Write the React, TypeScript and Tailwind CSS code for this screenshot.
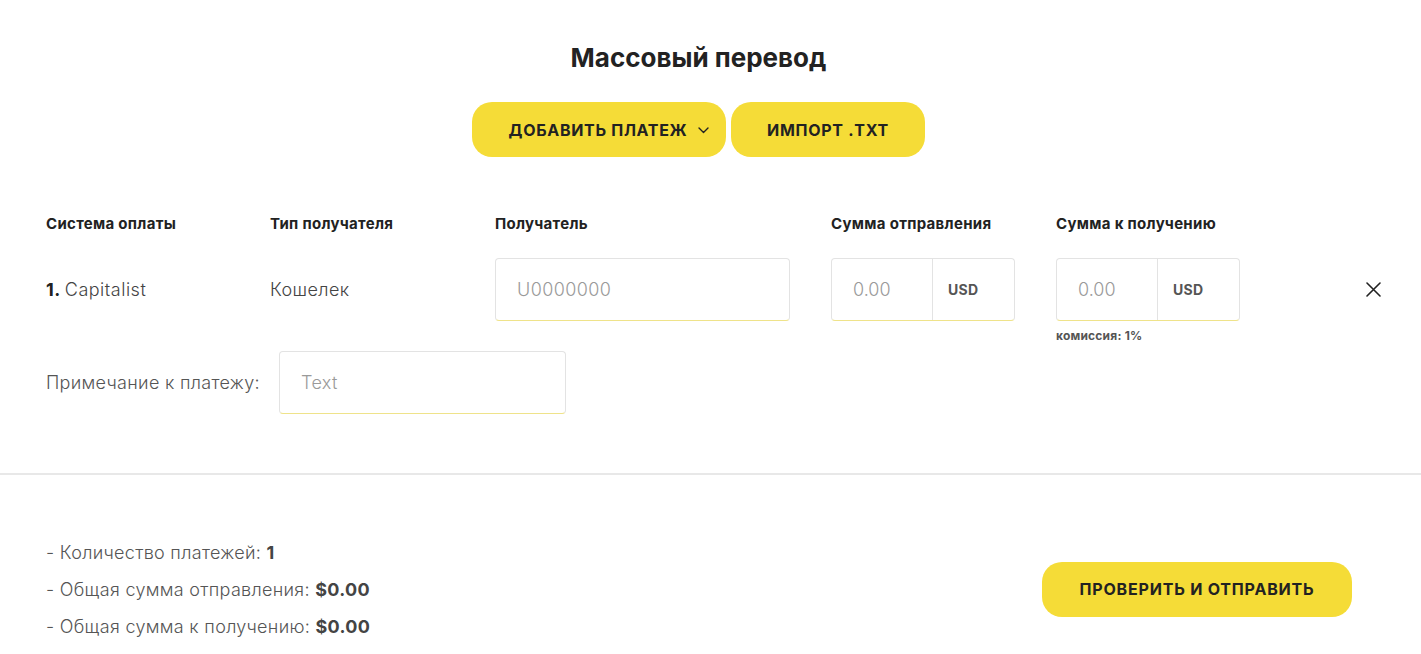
import React from "react";

const font = { fontFamily: "Inter, 'Noto Sans', sans-serif" };

const ChevronDown = () => (
  <svg width="11" height="7" viewBox="0 0 11 7" fill="none" className="ml-[11px] mt-[1px]">
    <path d="M1 1l4.5 4.5L10 1" stroke="#222" strokeWidth="1.4" strokeLinecap="round" strokeLinejoin="round" />
  </svg>
);

const CloseIcon = () => (
  <svg width="15" height="15" viewBox="0 0 15 15" fill="none">
    <path d="M1 1l13 13M14 1L1 14" stroke="#222" strokeWidth="1.6" strokeLinecap="round" />
  </svg>
);

const inputBox =
  "h-[63px] rounded-[4px] border border-[#e3e3e3] border-b-[#efe38a] bg-white px-[21px] text-[18px] font-light tracking-[0.4px] text-[#333] placeholder:text-[#9a9a9a] outline-none";

const AmountField = () => (
  <div className="flex h-[63px] w-[184px] rounded-[4px] border border-[#e3e3e3] border-b-[#efe38a]">
    <input
      placeholder="0.00"
      className="w-[101px] border-r border-[#e3e3e3] bg-transparent px-[21px] text-[18px] font-light text-[#333] placeholder:text-[#9a9a9a] outline-none"
    />
    <div className="flex flex-1 items-center pl-[15px] text-[14px] font-bold tracking-[0.3px] text-[#555]">USD</div>
  </div>
);

export default function App() {
  return (
    <div className="min-h-screen w-full bg-white text-[#222]" style={font}>
      <div className="flex flex-col items-center pr-[24px] pt-[41px]">
        <h1 className="text-[26px] font-bold leading-[34px] text-[#222]">Массовый перевод</h1>
        <div className="mt-[27px] flex gap-[5px]">
          <button className="flex h-[55px] w-[254px] items-center justify-center rounded-[20px] bg-[#f5dc37] pl-[20px] text-[16px] font-bold uppercase tracking-[0.7px] text-[#222]">
            Добавить платеж
            <ChevronDown />
          </button>
          <button className="flex h-[55px] w-[194px] items-center justify-center rounded-[20px] bg-[#f5dc37] text-[16px] font-bold uppercase tracking-[0.7px] text-[#222]">
            Импорт .txt
          </button>
        </div>
      </div>

      <div className="px-[46px] pt-[57px]">
        <div className="flex text-[15px] font-bold leading-[20px] tracking-[0.3px] text-[#222]">
          <div className="w-[224px]">Система оплаты</div>
          <div className="w-[225px]">Тип получателя</div>
          <div className="w-[336px]">Получатель</div>
          <div className="w-[225px]">Сумма отправления</div>
          <div>Сумма к получению</div>
        </div>

        <div className="mt-[24px] flex items-start">
          <div className="flex h-[63px] w-[224px] items-center text-[18px] font-light tracking-[0.5px] text-[#444]">
            <span className="mr-[4px] font-bold text-[#222]">1.</span>Capitalist
          </div>
          <div className="flex h-[63px] w-[225px] items-center text-[18px] font-light tracking-[0.4px] text-[#444]">Кошелек</div>
          <div className="w-[336px]">
            <input placeholder="U0000000" className={`${inputBox} w-[295px]`} />
          </div>
          <div className="w-[225px]">
            <AmountField />
          </div>
          <div className="flex flex-col">
            <AmountField />
            <div className="mt-[6px] text-[12px] font-bold tracking-[0.2px] text-[#555]">комиссия: 1%</div>
          </div>
          <button className="ml-auto mr-[-6px] flex h-[63px] items-center">
            <CloseIcon />
          </button>
        </div>

        <div className="mt-[6px] flex items-center">
          <span className="w-[233px] text-[18px] font-light tracking-[0.3px] text-[#555]">Примечание к платежу:</span>
          <input placeholder="Text" className={`${inputBox} w-[287px]`} />
        </div>
      </div>

      <div className="mt-[59px] h-[2px] w-full bg-[#e8e8e8]" />

      <div className="flex items-center justify-between pl-[46px] pr-[69px] pt-[66px]">
        <div className="flex flex-col gap-[13px] text-[18px] font-light leading-[24px] tracking-[0.3px] text-[#555]">
          <div>
            - Количество платежей: <span className="font-bold text-[#444]">1</span>
          </div>
          <div>
            - Общая сумма отправления: <span className="font-bold text-[#444]">$0.00</span>
          </div>
          <div>
            - Общая сумма к получению: <span className="font-bold text-[#444]">$0.00</span>
          </div>
        </div>
        <button className="mt-[-2px] h-[55px] w-[310px] rounded-[20px] bg-[#f5dc37] text-[16px] font-bold uppercase tracking-[0.8px] text-[#222]">
          Проверить и отправить
        </button>
      </div>
    </div>
  );
}
